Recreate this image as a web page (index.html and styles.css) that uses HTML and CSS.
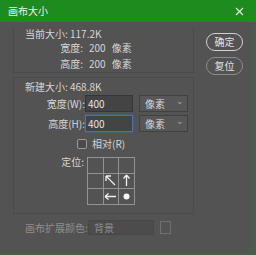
FILE: index.html
```html
<!DOCTYPE html>
<html>
<head>
    <title>画布大小</title>
    <link rel="stylesheet" href="styles.css">
</head>
<body>
    <div class="window">
        <!-- title bar -->
        <div class="titlebar">
            <span class="title">画布大小</span>
            <svg class="close" width="9" height="9" viewBox="0 0 9 9">
                <path d="M1 1L8 8M8 1L1 8" stroke="#d8ecd8" stroke-width="1.3"/>
            </svg>
        </div>

        <div class="content">
            <div class="main">
                <!-- current size -->
                <div class="group current">
                    <div class="legend">当前大小: 117.2K</div>
                    <div class="form">
                        <span class="label">宽度:</span>
                        <span class="value"><span>200</span><span>像素</span></span>
                        <span class="label row3">高度:</span>
                        <span class="value row3"><span>200</span><span>像素</span></span>
                    </div>
                </div>

                <!-- new size -->
                <div class="group fresh">
                    <div class="legend">新建大小: 468.8K</div>
                    <div class="field first">
                        <span class="label">宽度(W):</span>
                        <div class="input">400</div>
                        <div class="select">像素<span class="chev">&#8964;</span></div>
                    </div>
                    <div class="field">
                        <span class="label">高度(H):</span>
                        <div class="input focus">400</div>
                        <div class="select">像素<span class="chev">&#8964;</span></div>
                    </div>
                    <div class="check">
                        <span class="box"></span>
                        <span>相对(R)</span>
                    </div>
                    <div class="anchor">
                        <span class="label">定位:</span>
                        <svg class="grid" width="48" height="48" viewBox="0 0 48 48">
                            <g stroke="#939393" stroke-width="1" fill="none">
                                <rect x="0.5" y="0.5" width="47" height="47"/>
                                <path d="M16.5 0V48M31.5 0V48M0 16.5H48M0 31.5H48"/>
                            </g>
                            <g stroke="#f0f0f0" stroke-width="1.3" fill="none">
                                <path d="M28 28L19 19M19 19V24M19 19H24"/>
                                <path d="M39.5 29V18M39.5 18L36.5 21.5M39.5 18L42.5 21.5"/>
                                <path d="M29 39.5H18M18 39.5L21.5 36.5M18 39.5L21.5 42.5"/>
                            </g>
                            <circle cx="39.5" cy="39.5" r="3" fill="#f4f4f4"/>
                        </svg>
                    </div>
                </div>

                <!-- canvas extension color -->
                <div class="color">
                    <span class="clabel">画布扩展颜色:</span>
                    <div class="select dim">背景</div>
                    <span class="swatch"></span>
                </div>
            </div>

            <!-- buttons -->
            <div class="side">
                <a class="button default" href="#">确定</a>
                <a class="button" href="#">复位</a>
            </div>
        </div>
    </div>
</body>
</html>
```

FILE: styles.css
```css
/* page */
body {
    margin: 0;
    font-family: "Noto Sans CJK SC", "Noto Sans", sans-serif;
    font-size: 10px;
    color: #d6d6d6;
}

.window {
    width: 256px;
    height: 255px;
    background: #535353;
    box-shadow: inset -5px -4px 6px rgba(60, 120, 60, 0.25);
    overflow: hidden;
}

/* title bar */
.titlebar {
    height: 22px;
    background: #1e8b1e;
    display: flex;
    align-items: center;
    justify-content: space-between;
    padding: 0 12px 0 8px;
}

.title {
    color: #e8f2e8;
    line-height: 12px;
}

/* layout */
.content {
    display: flex;
    padding: 5px 0 0 13px;
}

.main {
    width: 181px;
}

.side {
    margin-left: 12px;
    padding-top: 6px;
    display: flex;
    flex-direction: column;
    gap: 6px;
}

/* group boxes */
.group {
    border: 1px solid #4a4a4a;
    box-sizing: border-box;
}

.current {
    border-top: none;
    padding-bottom: 1px;
}

.fresh {
    margin-top: 4px;
    padding: 2px 0 8px;
}

.legend {
    line-height: 14px;
    padding-left: 11px;
}

.label {
    text-align: right;
    line-height: 14px;
}

.form {
    display: grid;
    grid-template-columns: 69px auto;
}

.value {
    display: flex;
    gap: 6px;
    padding-left: 6px;
    line-height: 14px;
}

.row3 {
    margin-top: 2px;
}

/* input rows */
.field {
    display: flex;
    align-items: center;
    margin-top: 3px;
}

.field.first {
    margin-top: 1px;
}

.field .label {
    width: 71px;
}

.input {
    box-sizing: border-box;
    width: 48px;
    height: 17px;
    background: #444444;
    border: 1px solid #363636;
    padding-left: 2px;
    line-height: 15px;
    color: #e4e4e4;
}

.input.focus {
    border-color: #4e72a8;
    box-shadow: 0 0 2px #3d66a4;
}

.select {
    box-sizing: border-box;
    width: 49px;
    height: 17px;
    margin-left: 6px;
    background: #575757;
    border: 1px solid #414141;
    padding-left: 5px;
    line-height: 15px;
    display: flex;
    justify-content: space-between;
}

.chev {
    color: #a8a8a8;
    font-size: 9px;
    line-height: 9px;
    padding-right: 3px;
}

/* checkbox */
.check {
    display: flex;
    align-items: center;
    gap: 5px;
    margin-top: 5px;
    padding-left: 63px;
    line-height: 14px;
}

.box {
    box-sizing: border-box;
    width: 10px;
    height: 10px;
    border: 1px solid #9a9a9a;
    border-radius: 2px;
    background: #4a4a4a;
}

/* anchor */
.anchor {
    display: flex;
    margin-top: 6px;
}

.anchor .label {
    width: 70px;
    line-height: 12px;
    margin-top: -1px;
}

.grid {
    margin-left: 3px;
    display: block;
}

/* extension color */
.color {
    display: flex;
    align-items: center;
    margin-top: 6px;
    padding-left: 12px;
}

.clabel {
    flex: none;
    width: 63px;
    white-space: nowrap;
    color: #8e8e8e;
}

.select.dim {
    flex: none;
    width: 66px;
    height: 15px;
    margin-left: 0;
    background: #4c4c4c;
    border-color: #474747;
    line-height: 13px;
    color: #8e8e8e;
}

.swatch {
    flex: none;
    box-sizing: border-box;
    width: 11px;
    height: 13px;
    margin-left: 6px;
    border: 1px solid #707070;
}

/* buttons */
.button {
    display: block;
    box-sizing: border-box;
    width: 37px;
    height: 18px;
    border: 1px solid #8c8c8c;
    border-radius: 9px;
    color: #e2e2e2;
    text-align: center;
    line-height: 16px;
    text-decoration: none;
}

.button.default {
    border-color: #d0d0d0;
}
```
